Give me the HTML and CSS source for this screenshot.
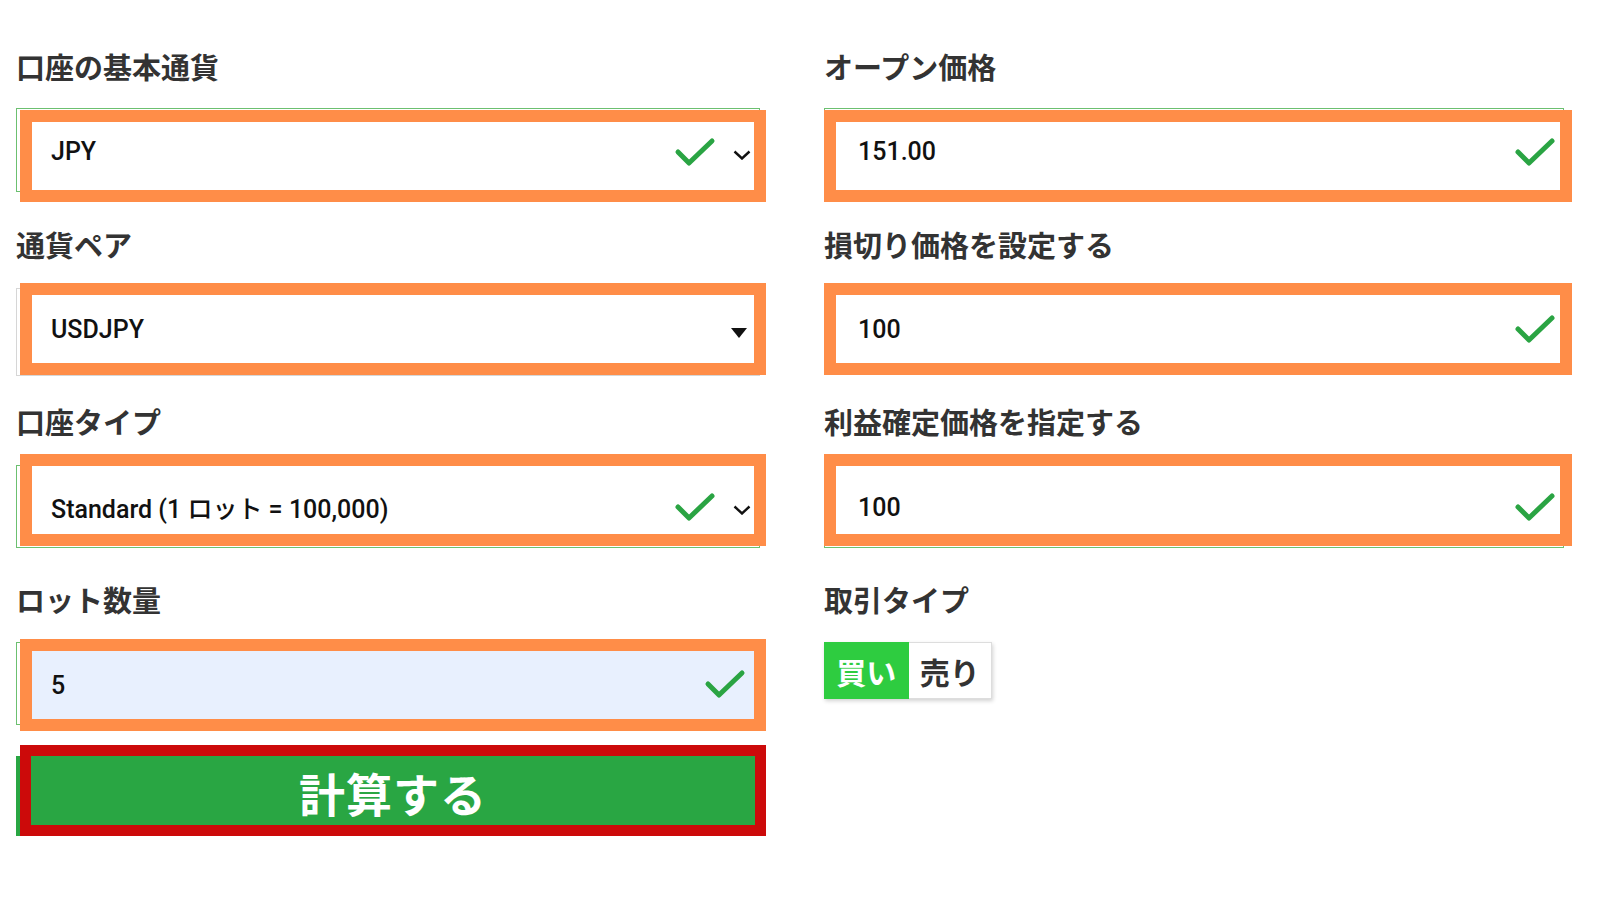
FILE: index.html
```html
<!DOCTYPE html>
<html lang="ja">
<head>
<meta charset="utf-8">
<title>計算</title>
<link rel="stylesheet" href="styles.css">
</head>
<body>
<div class="form">
  <div class="group r1">
    <div class="label">口座の基本通貨</div>
    <div class="field g-top">
      <span class="value">JPY</span>
      <span class="icons">
        <svg class="check" viewBox="0 0 42 30" width="42" height="30"><polyline points="4,15 15,26 38,4"/></svg>
        <svg class="chev" viewBox="0 0 18 10" width="18" height="10"><polyline points="1.5,1.5 9,8.5 16.5,1.5"/></svg>
      </span>
    </div>
  </div>
  <div class="group r1">
    <div class="label">オープン価格</div>
    <div class="field g-top right">
      <span class="value">151.00</span>
      <span class="icons">
        <svg class="check" viewBox="0 0 42 30" width="42" height="30"><polyline points="4,15 15,26 38,4"/></svg>
      </span>
    </div>
  </div>

  <div class="group r2">
    <div class="label">通貨ペア</div>
    <div class="field grey">
      <span class="value">USDJPY</span>
      <span class="icons">
        <svg class="tri" viewBox="0 0 16 10" width="16" height="10"><polygon points="0,0 16,0 8,10"/></svg>
      </span>
    </div>
  </div>
  <div class="group r2">
    <div class="label">損切り価格を設定する</div>
    <div class="field right">
      <span class="value">100</span>
      <span class="icons">
        <svg class="check" viewBox="0 0 42 30" width="42" height="30"><polyline points="4,15 15,26 38,4"/></svg>
      </span>
    </div>
  </div>

  <div class="group r3">
    <div class="label">口座タイプ</div>
    <div class="field g-bottom">
      <span class="value">Standard (1 ロット = 100,000)</span>
      <span class="icons">
        <svg class="check" viewBox="0 0 42 30" width="42" height="30"><polyline points="4,15 15,26 38,4"/></svg>
        <svg class="chev" viewBox="0 0 18 10" width="18" height="10"><polyline points="1.5,1.5 9,8.5 16.5,1.5"/></svg>
      </span>
    </div>
  </div>
  <div class="group r3">
    <div class="label">利益確定価格を指定する</div>
    <div class="field g-bottom right">
      <span class="value">100</span>
      <span class="icons">
        <svg class="check" viewBox="0 0 42 30" width="42" height="30"><polyline points="4,15 15,26 38,4"/></svg>
      </span>
    </div>
  </div>

  <div class="group r4">
    <div class="label">ロット数量</div>
    <div class="field g-mid filled">
      <span class="value">5</span>
      <span class="icons pad8">
        <svg class="check up" viewBox="0 0 42 30" width="42" height="30"><polyline points="4,15 15,26 38,4"/></svg>
      </span>
    </div>
    <div class="calc"><span>計算する</span></div>
  </div>
  <div class="group r4">
    <div class="label">取引タイプ</div>
    <div class="toggle">
      <span class="opt on">買い</span>
      <span class="opt">売り</span>
    </div>
  </div>
</div>
</body>
</html>
```

FILE: styles.css
```css
html {
  margin: 0;
  padding: 0;
  background: #ffffff;
}

body {
  margin: 0;
  padding: 0;
  font-family: "Noto Sans CJK JP", "Noto Sans", sans-serif;
  color: #333333;
}

.form {
  display: grid;
  grid-template-columns: 750px 748px;
  column-gap: 58px;
  padding: 49px 0 0 16px;
  align-items: start;
}

.group {
  display: flex;
  flex-direction: column;
}

.label {
  font-size: 29px;
  line-height: 34px;
  font-weight: 700;
  color: #333333;
  white-space: nowrap;
}

.r1 .label { margin-bottom: 27px; }
.r2 { margin-top: 25px; }
.r2 .label { margin-bottom: 22px; }
.r3 { margin-top: 29px; }
.r3 .label { margin-bottom: 16px; }
.r4 { margin-top: 36px; }
.r4 .label { margin-bottom: 23px; }

.field {
  position: relative;
  margin-left: 4px;
  height: 68px;
  border: 12px solid #ff8d48;
  background: #ffffff;
  display: flex;
  align-items: center;
  justify-content: space-between;
  padding: 0 3px 0 19px;
}

.field.right {
  margin-left: 0;
  padding: 0 4px 0 22px;
}

.field.filled {
  background: #e8f0fe;
}

.field.g-top {
  padding-bottom: 9px;
  height: 59px;
}

.field.g-bottom {
  padding-top: 14px;
  height: 54px;
}

.field.g-mid {
  padding-top: 1px;
  height: 67px;
}

.field::before {
  content: "";
  position: absolute;
  z-index: -1;
  left: -16px;
  width: 742px;
  height: 82px;
  border: 1px solid #6cc070;
}

.field.right::before {
  left: -12px;
  width: 738px;
}

.field.g-top::before { top: -14px; }
.field.g-bottom::before { top: -1px; height: 81px; }
.field.g-mid::before { top: -9px; height: 81px; }
.field.grey::before { top: -7px; height: 86px; border-color: #d6d6d6; }

.value {
  font-family: Roboto, "Noto Sans CJK JP", sans-serif;
  font-size: 25px;
  font-weight: 500;
  color: #111111;
  white-space: nowrap;
}

.icons {
  display: flex;
  align-items: center;
  gap: 17px;
}

.icons.pad8 {
  padding-right: 5px;
}

.check {
  display: block;
}

.check.up {
  margin-bottom: 4px;
}

.check polyline {
  fill: none;
  stroke: #2aa443;
  stroke-width: 5;
  stroke-linecap: round;
  stroke-linejoin: round;
}

.chev {
  display: block;
  margin-top: 6px;
}

.chev polyline {
  fill: none;
  stroke: #111111;
  stroke-width: 2.4;
}

.tri {
  display: block;
  margin-top: 8px;
  margin-right: 4px;
}

.tri polygon {
  fill: #111111;
}

.calc {
  margin-top: 14px;
  margin-left: 4px;
  height: 69px;
  border: 11px solid #cc0a0a;
  background: #29a643;
  display: flex;
  align-items: center;
  justify-content: center;
  position: relative;
}

.calc::before {
  content: "";
  position: absolute;
  z-index: -1;
  left: -15px;
  top: 0;
  width: 740px;
  height: 80px;
  background: #29a643;
}

.calc span {
  font-size: 46px;
  line-height: 1;
  font-weight: 700;
  color: #ffffff;
  letter-spacing: 1px;
  margin-top: 2px;
}

.toggle {
  display: flex;
  width: 168px;
  height: 57px;
  margin-top: 3px;
  box-shadow: 1px 2px 4px rgba(0, 0, 0, 0.18);
}

.opt {
  flex: 1;
  display: flex;
  align-items: center;
  justify-content: center;
  font-size: 30px;
  font-weight: 700;
  color: #333333;
  background: #ffffff;
  border: 1px solid #dddddd;
  border-left: none;
}

.opt.on {
  background: #2ecc40;
  color: #ffffff;
  border: 1px solid #2ecc40;
}
```
